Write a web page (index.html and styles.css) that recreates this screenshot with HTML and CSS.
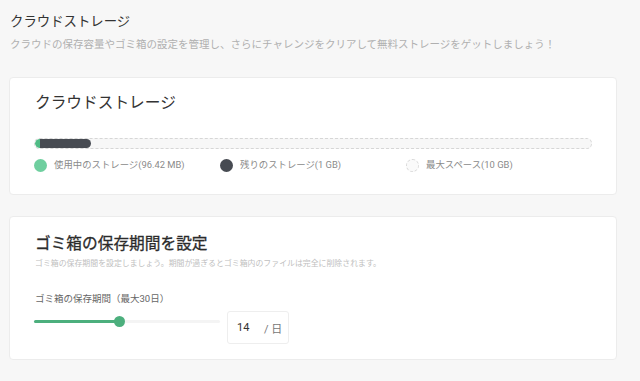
FILE: index.html
```html
<!DOCTYPE html>
<html lang="ja">
<head>
  <meta charset="UTF-8">
  <title>クラウドストレージ</title>
  <link rel="stylesheet" href="styles.css">
</head>
<body>

<div class="page">
  <h1 class="page-title">クラウドストレージ</h1>
  <p class="page-desc">クラウドの保存容量やゴミ箱の設定を管理し、さらにチャレンジをクリアして無料ストレージをゲットしましょう！</p>

  <section class="card storage">
    <h2 class="card-title">クラウドストレージ</h2>
    <div class="bar">
      <div class="bar-used" style="width: 0.94%;"></div>
      <div class="bar-free" style="width: 9.06%;"></div>
    </div>
    <ul class="legend">
      <li><span class="dot used"></span>使用中のストレージ(96.42 MB)</li>
      <li><span class="dot free"></span>残りのストレージ(1 GB)</li>
      <li><span class="dot max"></span>最大スペース(10 GB)</li>
    </ul>
  </section>

  <section class="card trash">
    <h2 class="card-title big">ゴミ箱の保存期間を設定</h2>
    <p class="card-desc">ゴミ箱の保存期間を設定しましょう。期間が過ぎるとゴミ箱内のファイルは完全に削除されます。</p>
    <div class="field-label">ゴミ箱の保存期間（最大30日）</div>
    <div class="field-row">
      <div class="slider">
        <div class="track">
          <div class="track-fill" style="width: 45.8%;"></div>
          <span class="thumb" style="left: 45.8%;"></span>
        </div>
      </div>
      <div class="days">
        <span class="days-value">14</span>
        <span class="days-unit">/ 日</span>
      </div>
    </div>
  </section>
</div>

</body>
</html>
```

FILE: styles.css
```css
body {
  font-family: Roboto, "Noto Sans CJK JP", sans-serif;
  background: #f7f7f7;
  margin: 0;
  padding: 0;
  color: #333;
}

.page {
  padding: 12px 0 0 9px;
  width: 608px;
}

.page-title {
  margin: 0 0 0 1px;
  font-size: 13.4px;
  line-height: 20px;
  font-weight: 400;
  color: #333;
}

.page-desc {
  margin: 5px 0 0 1px;
  font-size: 10.5px;
  line-height: 16px;
  color: #b0b0b0;
}

.card {
  background: white;
  border: 1px solid #ececec;
  border-radius: 4px;
  padding: 12px 24px 22px 25px;
  margin-top: 24px;
}

.trash {
  margin-top: 21px;
  padding-top: 13px;
  padding-bottom: 15px;
}

.card-title {
  margin: 0;
  font-size: 15.7px;
  line-height: 26px;
  font-weight: 400;
  color: #333;
}

.card-title.big {
  line-height: 28px;
  color: #2b2b2b;
  -webkit-text-stroke: 0.3px #2b2b2b;
}

.bar {
  margin: 22px 0 0 -1px;
  height: 9px;
  border: 1px dashed #d6d6d6;
  border-radius: 6px;
  background: #f7f7f7;
  display: flex;
  overflow: hidden;
}

.bar-used {
  background: #4fbb85;
  border-radius: 5px 0 0 5px;
}

.bar-free {
  background: #474b52;
  border-radius: 0 5px 5px 0;
}

.legend {
  list-style: none;
  margin: 9px 0 0 -1px;
  padding: 0;
  display: grid;
  grid-template-columns: repeat(3, 1fr);
  font-size: 9.4px;
  color: #8a8a8a;
}

.legend li {
  display: flex;
  align-items: center;
  gap: 7px;
  line-height: 14px;
}

.dot {
  width: 13px;
  height: 13px;
  border-radius: 50%;
  box-sizing: border-box;
}

.dot.used {
  background: #6fcf9f;
}

.dot.free {
  background: #474b52;
}

.dot.max {
  border: 1px dashed #d8d8d8;
  background: #fafafa;
}

.card-desc {
  margin: 0;
  font-size: 7.9px;
  line-height: 12px;
  color: #c0c0c0;
}

.field-label {
  margin-top: 22px;
  font-size: 9.5px;
  line-height: 14px;
  color: #666;
}

.field-row {
  display: flex;
  align-items: flex-start;
  gap: 7px;
}

.slider {
  width: 186px;
  height: 30px;
  display: flex;
  align-items: center;
  margin-left: -1px;
}

.track {
  position: relative;
  width: 100%;
  height: 3px;
  background: #f4f4f4;
  border-radius: 2px;
}

.track-fill {
  height: 100%;
  background: #4caf7d;
  border-radius: 2px;
}

.thumb {
  position: absolute;
  top: 50%;
  width: 11px;
  height: 11px;
  margin: -5.5px 0 0 -5.5px;
  border-radius: 50%;
  background: #4caf7d;
}

.days {
  margin-top: 5px;
  width: 62px;
  height: 33px;
  box-sizing: border-box;
  border: 1px solid #eeeeee;
  border-radius: 3px;
  display: flex;
  align-items: center;
  padding-left: 9px;
  font-size: 11px;
}

.days-value {
  width: 27px;
  color: #333;
}

.days-unit {
  color: #777;
}
```
